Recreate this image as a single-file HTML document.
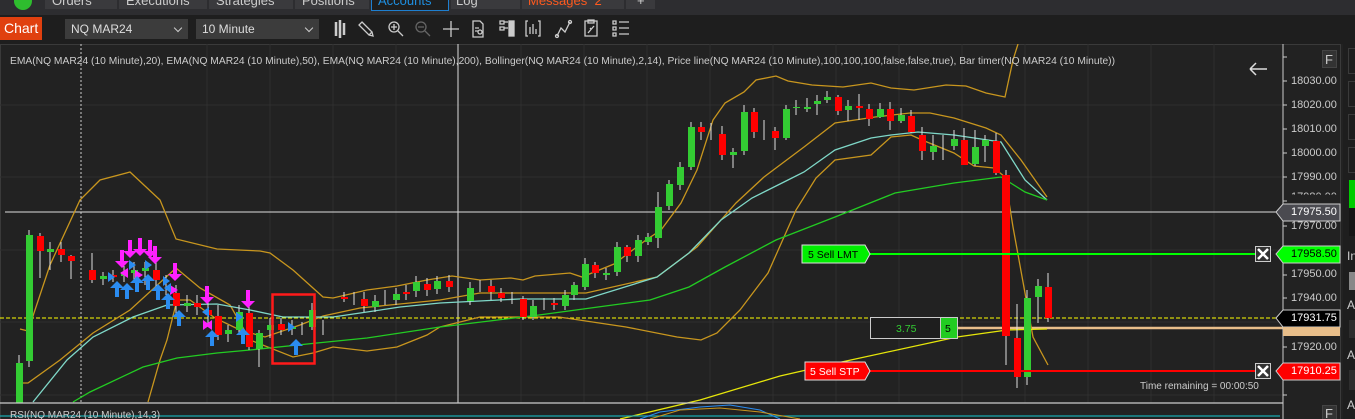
<!DOCTYPE html>
<html><head><meta charset="utf-8"><style>
*{margin:0;padding:0;box-sizing:border-box}
body{width:1355px;height:419px;overflow:hidden;background:#1e1e1e;font-family:"Liberation Sans",sans-serif;position:relative}
.abs{position:absolute}
.tab{position:absolute;top:0;height:9px;background:#3a3a3d}
.tt{position:absolute;top:-7px;color:#ccc;font-size:13px}
.dd{position:absolute;top:19px;height:20px;background:#3c3c3c;color:#ddd;font-size:12px;line-height:20px;padding-left:6px}
.dd:after{content:"";position:absolute;right:7px;top:6px;width:5px;height:5px;border-right:1.5px solid #ccc;border-bottom:1.5px solid #ccc;transform:rotate(45deg)}
.ax{position:absolute;left:1291px;color:#ccc;font-size:11px}
</style></head><body>
<div class="abs" style="left:0;top:0;width:1355px;height:15px;background:#2d2d30"></div>
<div class="abs" style="left:14px;top:-8px;width:18px;height:18px;border-radius:50%;background:#2ebd2e"></div>
<div class="tab" style="left:45px;width:72px"></div>
<div class="tab" style="left:119px;width:88px"></div>
<div class="tab" style="left:209px;width:84px"></div>
<div class="tab" style="left:295px;width:74px"></div>
<div class="abs" style="left:371px;top:0;width:78px;height:11px;border:1px solid #1e7fd0;border-top:0;background:#1e1e1e"></div>
<div class="tab" style="left:451px;width:69px"></div>
<div class="tab" style="left:522px;width:102px"></div>
<div class="tab" style="left:626px;width:29px"></div>
<div class="tt" style="left:52px">Orders</div>
<div class="tt" style="left:126px">Executions</div>
<div class="tt" style="left:216px">Strategies</div>
<div class="tt" style="left:302px">Positions</div>
<div class="tt" style="left:378px;color:#1e8fe0">Accounts</div>
<div class="tt" style="left:456px">Log</div>
<div class="tt" style="left:528px;color:#ff5a1e">Messages &nbsp;2</div>
<div class="tt" style="left:637px">+</div>

<div class="abs" style="left:0;top:17px;width:42px;height:23px;background:#e0400f;color:#fff;font-size:14px;line-height:23px;padding-left:4px">Chart</div>
<div class="dd" style="left:65px;width:123px">NQ MAR24</div>
<div class="dd" style="left:196px;width:123px">10 Minute</div>
<svg class="abs" style="left:330px;top:17px" width="310" height="23" viewBox="330 17 310 23" fill="none" stroke="#ccc" stroke-width="1.3">
<path d="M336 22v14M340 20v18M344 23v12" stroke-width="2.5"/>
<path d="M362 22l10 10-3 3-10-10zM369 35l4 1-1-4"/>
<circle cx="394" cy="27" r="5"/><path d="M391 27h6M394 24v6M398 31l5 5" />
<circle cx="421" cy="27" r="5" stroke="#666"/><path d="M418 27h6M425 31l5 5" stroke="#666"/>
<path d="M451 21v16M443 29h16"/>
<path d="M473 21h7l3 3v13h-10zM475 28h4M475 31h3"/><circle cx="480" cy="32" r="2"/>
<path d="M500 21h4v3h-4zM500 27h4v3h-4zM504 22h4M504 28h4"/><rect x="509" y="21" width="5" height="15" fill="#ccc"/>
<path d="M528 21h-2v15h2M538 21h2v15h-2M530 27v7M533 24v10M536 29v5"/>
<path d="M557 36l4-8 4 4 5-10"/><circle cx="557" cy="36" r="1.5"/><circle cx="570" cy="22" r="1.5"/>
<path d="M585 21h12v15h-12zM588 20h6v3h-6zM588 33l6-7M590 28l1 1"/>
<path d="M613 21h3v3h-3zM613 27h3v3h-3zM613 33h3v3h-3zM619 22h10M619 28h10M619 34h10"/>
</svg>

<svg class="abs" style="left:0;top:44px" width="1343" height="375" viewBox="0 44 1343 375">
<rect x="0" y="44" width="1343" height="375" fill="#222222"/>
<rect x="0.5" y="44.5" width="1340" height="380" fill="none" stroke="#3a3a3a"/>
<g stroke="#2f2f2f" stroke-width="1">
<path d="M0 105H1283M0 177H1283M0 250H1283M0 322H1283M0 395H1283"/>
<path d="M207 44V403M270 44V403M333 44V403M396 44V403M521 44V403M584 44V403M647 44V403M710 44V403M773 44V403M836 44V403M899 44V403M962 44V403M1025 44V403M1088 44V403M1151 44V403M1214 44V403"/>
</g>
<path d="M81 44V403" stroke="#ccc" stroke-dasharray="2,2"/>
<path d="M458 44V403" stroke="#ddd"/>
<path d="M5 212H1283" stroke="#ddd"/>
<path d="M0 318H1283" stroke="#ffff00" stroke-dasharray="4,2"/>
<path d="M947 328H1283" stroke="#e8be8a" stroke-width="2.5"/>
<g fill="none" stroke-width="1.3">
<polyline stroke="#c8961e" points="20,329 28,331 50,265 80,200 100,180 130,172 160,200 176,239 217,249 260,251 270,253 293,270 323,297 333,298 367,290 397,286 427,280 452,276 480,280 511,278 523,280 535,276 570,273 582,277 614,264 646,240 661,230 681,203 697,170 713,120 725,103 744,92 756,80 776,76 788,81 812,85 843,87 871,83 891,88 914,90 946,85 966,86 986,93 1005,97 1013,60 1018,44"/>
<polyline stroke="#c8961e" points="20,383 28,383 60,360 93,333 130,310 176,268 200,288 230,305 250,340 293,357 313,353 333,347 367,351 397,347 427,335 440,327 480,317 559,317 626,327 677,337 701,340 717,333 740,310 768,273 796,210 816,178 835,160 871,155 891,137 911,135 922,140 954,153 974,166 994,168 1005,177 1013,227 1025,293 1033,337 1048,365"/>
<polyline stroke="#c8961e" points="148,402 160,360 167,340 177,300 190,300 215,318 240,330 265,337 300,325 323,316 360,308 440,300 480,293 519,293 586,293 657,277 697,247 736,203 764,177 804,147 835,123 875,117 910,113 930,113 954,118 986,128 1001,135 1021,160 1047,197"/>
<polyline stroke="#7fd8c8" points="33,402 67,360 93,337 133,317 167,305 217,304 250,310 283,317 333,317 367,312 400,307 440,303 519,299 586,299 657,277 689,253 721,220 752,198 784,182 804,172 835,150 871,138 891,135 918,132 954,135 1001,142 1025,180 1047,200"/>
<polyline stroke="#22cc22" points="73,402 90,392 143,367 177,358 217,353 250,350 317,343 367,338 440,327 539,315 598,307 650,300 689,287 725,267 776,240 835,217 895,193 954,183 1001,177 1025,192 1047,200"/>
<polyline stroke="#e6e60a" points="620,419 700,400 780,376 837,363 957,337 1007,330 1047,329"/>
</g>
<g stroke="#ddd" stroke-width="1">
<path d="M19 355V403M29 230V367M40 233V278M50 242V270M61 242V262M71 255V279M92 253V283M103 272V285M113 270V282M124 266V282M134 262V280M145 262V285M156 262V290M166 275V295M176 285V315M187 295V312M197 295V315M208 300V325M218 305V340M228 325V342M239 305V335M249 305V350M259 330V367M270 318V338M281 318V335M292 320V335M302 322V335M312 303V330M323 320V335M344 292V302M354 292V305M364 292V312M375 295V312M385 290V305M396 288V305M406 285V300M416 276V297M427 278V296M437 276V294M449 275V292M470 282V305M480 280V292M491 280V300M501 288V302M512 292V304M523 296V320M533 300V320M544 298V310M554 298V310M565 290V310M574 282V300M585 258V290M595 262V278M606 268V280M617 242V276M627 245V262M638 235V262M648 233V245M658 192V248M669 180V210M680 162V190M691 122V170M701 122V140M711 123V140M722 126V160M733 148V168M744 105V155M754 108V138M764 120V140M775 127V150M786 105V140M796 100V115M807 98V112M817 95V115M827 91V103M838 95V115M848 100V121M859 94V120M869 104V126M880 103V118M890 102V130M901 108V123M911 110V133M922 127V160M933 135V160M943 135V160M954 130V150M964 128V165M975 130V166M985 135V162M996 133V175M1006 170V365M1017 304V388M1027 290V385M1038 279V323M1048 273V322"/>
</g>
<g fill="#33cc33">
<rect x="16" y="363" width="7" height="40"/><rect x="26" y="235" width="7" height="126"/><rect x="47" y="249" width="7" height="3"/><rect x="100" y="276" width="7" height="3"/><rect x="121" y="272" width="7" height="4"/><rect x="131" y="270" width="7" height="3"/><rect x="142" y="268" width="7" height="3"/><rect x="184" y="303" width="7" height="3"/><rect x="225" y="330" width="7" height="4"/><rect x="236" y="312" width="7" height="18"/><rect x="256" y="333" width="7" height="16"/><rect x="267" y="325" width="7" height="5"/><rect x="289" y="327" width="7" height="2"/><rect x="309" y="310" width="7" height="17"/><rect x="372" y="301" width="7" height="6"/><rect x="393" y="294" width="7" height="6"/><rect x="413" y="282" width="7" height="9"/><rect x="434" y="281" width="7" height="8"/><rect x="467" y="288" width="7" height="13"/><rect x="530" y="306" width="7" height="11"/><rect x="562" y="295" width="7" height="11"/><rect x="571" y="285" width="7" height="10"/><rect x="582" y="264" width="7" height="23"/><rect x="603" y="273" width="7" height="2"/><rect x="614" y="247" width="7" height="25"/><rect x="635" y="240" width="7" height="16"/><rect x="645" y="237" width="7" height="5"/><rect x="655" y="207" width="7" height="31"/><rect x="666" y="184" width="7" height="22"/><rect x="677" y="167" width="7" height="18"/><rect x="688" y="127" width="7" height="40"/><rect x="730" y="152" width="7" height="3"/><rect x="741" y="112" width="7" height="39"/><rect x="783" y="109" width="7" height="29"/><rect x="793" y="107" width="7" height="1"/><rect x="804" y="107" width="7" height="2"/><rect x="814" y="101" width="7" height="3"/><rect x="824" y="97" width="7" height="3"/><rect x="845" y="106" width="7" height="4"/><rect x="877" y="109" width="7" height="8"/><rect x="898" y="115" width="7" height="6"/><rect x="930" y="146" width="7" height="6"/><rect x="951" y="139" width="7" height="7"/><rect x="972" y="147" width="7" height="17"/><rect x="982" y="140" width="7" height="6"/><rect x="1024" y="298" width="7" height="79"/><rect x="1035" y="286" width="7" height="11"/>
</g>
<g fill="#ff0000">
<rect x="37" y="236" width="7" height="15"/><rect x="58" y="249" width="7" height="6"/><rect x="68" y="256" width="7" height="5"/><rect x="89" y="270" width="7" height="10"/><rect x="110" y="275" width="7" height="2"/><rect x="153" y="270" width="7" height="10"/><rect x="173" y="293" width="7" height="13"/><rect x="194" y="303" width="7" height="4"/><rect x="205" y="310" width="7" height="5"/><rect x="215" y="316" width="7" height="19"/><rect x="246" y="313" width="7" height="34"/><rect x="278" y="324" width="7" height="6"/><rect x="341" y="297" width="7" height="2"/><rect x="361" y="299" width="7" height="7"/><rect x="403" y="292" width="7" height="2"/><rect x="424" y="284" width="7" height="6"/><rect x="446" y="281" width="7" height="6"/><rect x="488" y="286" width="7" height="6"/><rect x="498" y="293" width="7" height="5"/><rect x="520" y="299" width="7" height="18"/><rect x="551" y="303" width="7" height="2"/><rect x="592" y="265" width="7" height="8"/><rect x="624" y="247" width="7" height="9"/><rect x="698" y="127" width="7" height="5"/><rect x="719" y="134" width="7" height="21"/><rect x="751" y="112" width="7" height="20"/><rect x="772" y="131" width="7" height="7"/><rect x="835" y="97" width="7" height="14"/><rect x="856" y="106" width="7" height="2"/><rect x="866" y="109" width="7" height="10"/><rect x="887" y="109" width="7" height="12"/><rect x="908" y="116" width="7" height="16"/><rect x="919" y="135" width="7" height="16"/><rect x="961" y="140" width="7" height="25"/><rect x="993" y="141" width="7" height="32"/><rect x="1002" y="175" width="8" height="161"/><rect x="1014" y="338" width="7" height="39"/><rect x="1045" y="287" width="7" height="31"/>
</g>
<g fill="#ff20ff">
<path d="M128 240h4v11h5l-7 7-7-7h5z"/><path d="M138 238h4v11h5l-7 7-7-7h5z"/><path d="M148 240h4v11h5l-7 7-7-7h5z"/><path d="M153 246h4v11h5l-7 7-7-7h5z"/><path d="M120 250h4v11h5l-7 7-7-7h5z"/><path d="M173 263h4v11h5l-7 7-7-7h5z"/><path d="M205 286h4v11h5l-7 7-7-7h5z"/><path d="M246 290h4v11h5l-7 7-7-7h5z"/><path d="M170 285l8 5-8 5z"/><path d="M212 320l-7 5 7 5z"/><path d="M203 320l7 5-7 5z"/><path d="M135 270l8 5-8 5z"/><path d="M128 268l-8 5 8 5z"/>
</g>
<g fill="#2b8cf0">
<path d="M111 297h4v-9h-5l7-7 7 7h-5v9z"/><path d="M121 299h4v-9h-5l7-7 7 7h-5v9z"/><path d="M131 292h4v-9h-5l7-7 7 7h-5v9z"/><path d="M142 290h4v-9h-5l7-7 7 7h-5v9z"/><path d="M152 300h4v-9h-5l7-7 7 7h-5v9z"/><path d="M162 309h4v-9h-5l7-7 7 7h-5v9z"/><path d="M173 326h4v-9h-5l7-7 7 7h-5v9z"/><path d="M206 346h4v-9h-5l7-7 7 7h-5v9z"/><path d="M237 344h4v-9h-5l7-7 7 7h-5v9z"/><path d="M290 355h4v-9h-5l7-7 7 7h-5v9z"/><path d="M108 272l7 5-7 5z"/><path d="M129 260l7 5-7 5z"/><path d="M145 260l7 5-7 5z"/><path d="M163 276l7 5-7 5z"/><path d="M209 307l-7 5 7 5z"/><path d="M236 312l7 5-7 5z"/><path d="M288 322l7 5-7 5z"/><path d="M171 283l-7 5 7 5z"/>
</g>
<rect x="272.5" y="294.5" width="42" height="69" fill="none" stroke="#ff1a1a" stroke-width="2.5"/>
<path d="M870 254H1260" stroke="#00ff00" stroke-width="2"/>
<path d="M870 371H1260" stroke="#ff0000" stroke-width="2"/>
<path d="M802 245H865l5 9-5 9H802z" fill="#00ee00" stroke="#ddd"/>
<text x="808" y="258" font-size="10.5" fill="#000">5  Sell LMT</text>
<path d="M805 362H865l5 9-5 9H805z" fill="#ff0000" stroke="#ddd"/>
<text x="810" y="375" font-size="10.5" fill="#fff">5  Sell STP</text>
<rect x="870.5" y="317.5" width="70" height="21" fill="#1e1e1e" stroke="#ccc"/>
<text x="896" y="332" font-size="10.5" fill="#33cc33">3.75</text>
<rect x="940.5" y="317.5" width="17" height="21" fill="#22cc22" stroke="#ccc"/>
<text x="945" y="332" font-size="10.5" fill="#000">5</text>
<g stroke="#ccc" fill="#333"><rect x="1255.5" y="246.5" width="15" height="15"/><rect x="1255.5" y="363.5" width="15" height="15"/></g>
<path d="M1258 249l10 10M1268 249l-10 10M1258 366l10 10M1268 366l-10 10" stroke="#fff" stroke-width="2.5"/>
<text x="1140" y="389" font-size="10" fill="#ccc">Time remaining = 00:00:50</text>
<path d="M1250 69H1267M1250 69l6-6M1250 69l6 6" stroke="#ddd" stroke-width="1.5" fill="none"/>
<path d="M1283 44V419" stroke="#ccc"/>
<path d="M1283 57h4M1283 81h4M1283 105h4M1283 129h4M1283 153h4M1283 177h4M1283 201h4M1283 226h4M1283 275h4M1283 298h4M1283 347h4M1283 371h4M1283 395h4" stroke="#ccc"/>
<rect x="1322.5" y="50.5" width="14" height="17" fill="#333" stroke="#444"/>
<text x="1325" y="64" font-size="13" fill="#ccc">F</text>
<rect x="1322.5" y="405.5" width="14" height="17" fill="#333" stroke="#444"/>
<text x="1325" y="418" font-size="13" fill="#ccc">F</text>
<path d="M0 403H1283" stroke="#ccc" stroke-width="1.3"/>
<path d="M0 416H1280" stroke="#1aa8b0" stroke-width="1.3"/>
<polyline points="640,419 660,412 700,407 730,405 760,410 780,419" fill="none" stroke="#2b8cf0"/>
<polyline points="650,419 680,410 720,408 760,412 800,419" fill="none" stroke="#c8961e"/>
<text x="10" y="418" font-size="10" fill="#ccc">RSI(NQ MAR24 (10 Minute),14,3)</text>
<text x="10" y="64" font-size="10" fill="#ccc" textLength="1105" lengthAdjust="spacingAndGlyphs">EMA(NQ MAR24 (10 Minute),20), EMA(NQ MAR24 (10 Minute),50), EMA(NQ MAR24 (10 Minute),200), Bollinger(NQ MAR24 (10 Minute),2,14), Price line(NQ MAR24 (10 Minute),100,100,100,false,false,true), Bar timer(NQ MAR24 (10 Minute))</text>
<path d="M1276 212l7-8H1340v17H1283z" fill="#4a4a50" stroke="#ccc"/>
<path d="M1276 254l7-8H1340v17H1283z" fill="#00ff00" stroke="#ccc"/>
<path d="M1276 318l7-8H1340v17H1283z" fill="#000" stroke="#ccc"/>
<rect x="1283" y="327" width="57" height="9" fill="#e8be8a"/>
<path d="M1276 371l7-8H1340v17H1283z" fill="#ff0000" stroke="#ccc"/>
</svg>
<div class="ax" style="top:75px">18030.00</div>
<div class="ax" style="top:99px">18020.00</div>
<div class="ax" style="top:123px">18010.00</div>
<div class="ax" style="top:147px">18000.00</div>
<div class="ax" style="top:171px">17990.00</div>
<div class="ax" style="top:191px;clip-path:inset(0 0 70% 0)">17980.00</div>
<div class="ax" style="top:220px">17970.00</div>
<div class="ax" style="top:268px">17950.00</div>
<div class="ax" style="top:292px">17940.00</div>
<div class="ax" style="top:341px">17920.00</div>
<div class="ax" style="top:206px;color:#fff">17975.50</div>
<div class="ax" style="top:248px;color:#000">17958.50</div>
<div class="ax" style="top:312px;color:#fff">17931.75</div>
<div class="ax" style="top:365px;color:#fff">17910.25</div>
<div class="abs" style="left:1343px;top:44px;width:12px;height:375px;background:#1e1e1e"></div>
<div class="abs" style="left:1348px;top:48px;width:8px;height:26px;border:1px solid #3a3a3a"></div>
<div class="abs" style="left:1348px;top:81px;width:8px;height:26px;border:1px solid #3a3a3a"></div>
<div class="abs" style="left:1348px;top:114px;width:8px;height:26px;border:1px solid #3a3a3a"></div>
<div class="abs" style="left:1348px;top:147px;width:8px;height:26px;border:1px solid #3a3a3a"></div>
<div class="abs" style="left:1349px;top:180px;width:7px;height:28px;background:#00cc00"></div>
<div class="abs" style="left:1349px;top:208px;width:7px;height:28px;background:#161616"></div>
<div class="abs" style="left:1347px;top:249px;color:#ccc;font-size:12px">In</div>
<div class="abs" style="left:1349px;top:272px;width:7px;height:18px;background:#888"></div>
<div class="abs" style="left:1347px;top:298px;color:#ccc;font-size:12px">A</div>
<div class="abs" style="left:1349px;top:320px;width:7px;height:18px;background:#2e2e2e"></div>
<div class="abs" style="left:1347px;top:348px;color:#ccc;font-size:12px">A</div>
<div class="abs" style="left:1349px;top:370px;width:7px;height:20px;background:#2e2e2e"></div>
<div class="abs" style="left:1347px;top:398px;color:#ccc;font-size:12px">A</div>
</body></html>
